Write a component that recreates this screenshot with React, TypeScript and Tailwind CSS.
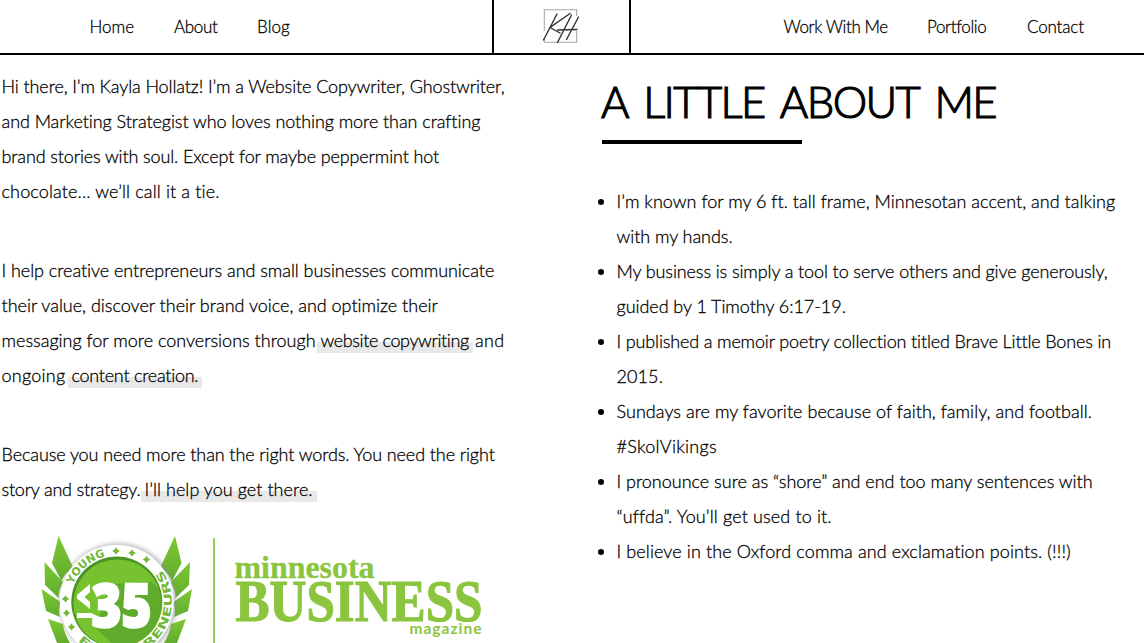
import type { ReactNode } from "react";

function Line({ className = "", children }: { className?: string; children: ReactNode }) {
  return <span className={`block h-[35px] whitespace-nowrap ${className}`}>{children}</span>;
}

function Highlight({ className = "", children }: { className?: string; children: ReactNode }) {
  return (
    <a
      href="#"
      className={`mt-[8px] block h-[22px] bg-linear-to-b from-transparent from-50% to-[#e8e8e8] to-50% pl-[3.5px] leading-[19px] ${className}`}
    >
      {children}
    </a>
  );
}

function Monogram() {
  return (
    <svg width="40" height="40" viewBox="540 5 40 40" fill="none" className="mr-[4px]">
      <path d="M576.7 16V9.7H544.3V31M544.3 38V42.3H576.7V31" stroke="#a8a8a8" strokeWidth="1.1" />
      <path d="M557 14L543.5 40M570 13.5L550 27.5L560 33M571.5 15L557.5 42.5M557.5 30L577 29.5M578.5 17L566.5 39.5" stroke="#333" strokeWidth="1.4" strokeLinecap="round" />
    </svg>
  );
}

const stars = [[116, 551], [132, 553], [146.5, 559.5], [65.5, 599], [66.5, 613], [71.5, 627]];

function AwardLogo() {
  return (
    <svg width="500" height="123" viewBox="0 520 500 123" className="block">
      <defs>
        <linearGradient id="leaf" x1="0" y1="0" x2="0" y2="1">
          <stop offset="0" stopColor="#7cc832" />
          <stop offset="1" stopColor="#62ad2c" />
        </linearGradient>
        <filter id="soft" x="-20%" y="-20%" width="140%" height="140%">
          <feGaussianBlur stdDeviation="2" />
        </filter>
        <clipPath id="disc"><circle cx="116.8" cy="602" r="45" /></clipPath>
        <path id="arcTop" d="M69.8 602A47 47 0 0 1 163.8 602" />
        <path id="arcBottom" d="M61.8 602A55 55 0 0 0 171.8 602A55 55 0 0 0 116.8 547" />
      </defs>
      <g fill="url(#leaf)">
        <path d="M58.5 536L73 567Q65 573 61.5 581L52 563Z" />
        <path d="M44.5 562L63 582Q58.5 590 58.5 598L45 585Z" />
        <path d="M41.5 589L60.5 602Q58 611 60 617L46 611Z" />
        <path d="M48 619L63 624Q64 633 70 643H57Z" />
        <path d="M175 536L160.5 567Q168.5 573 172 581L181.5 563Z" />
        <path d="M190 562L171 582Q175.5 590 175.5 598L189 585Z" />
        <path d="M192 589L173.5 602Q176 611 174 617L188 611Z" />
        <path d="M186 619L171 624Q170 633 164 643H177Z" />
      </g>
      <circle cx="118" cy="602" r="59" fill="#888" opacity=".5" filter="url(#soft)" />
      <circle cx="116.8" cy="602" r="57" fill="#fff" />
      <circle cx="116.8" cy="602" r="45.5" fill="#4d9425" />
      <circle cx="117.5" cy="603.5" r="44" fill="#76c32f" />
      <g clipPath="url(#disc)">
        <path d="M110 584L152 582L175 605V670H140L96 628Z" fill="#4f9829" opacity=".55" />
      </g>
      <g fill="#72b83a">
        {stars.map(([x, y]) => (
          <path key={`${x}-${y}`} transform={`translate(${x} ${y})`} d="M0-3.8L1.5-1.5L3.8 0L1.5 1.5L0 3.8L-1.5 1.5L-3.8 0L-1.5-1.5Z" />
        ))}
      </g>
      <g fill="#72b83a" className="font-['DejaVu_Sans'] text-[11px] font-bold">
        <text><textPath href="#arcTop" startOffset="18" textLength="44" lengthAdjust="spacingAndGlyphs">YOUNG</textPath></text>
        <text><textPath href="#arcBottom" startOffset="43" textLength="164" lengthAdjust="spacingAndGlyphs">ENTREPRENEURS</textPath></text>
      </g>
      <text x="91.5" y="627" textLength="60" lengthAdjust="spacingAndGlyphs" fill="#fff" stroke="#fff" strokeWidth="2.5" className="font-['Open_Sans'] text-[61px] font-extrabold">35</text>
      <path d="M90 584V592L84.5 597L90 602V609L77 598.5V595Z" fill="#fff" />
      <path d="M77 613H92V618H77Z" fill="#fff" />
      <path d="M214 538V643" stroke="#8fcf5a" strokeWidth="2" />
      <g fill="#8bc53f" stroke="#8bc53f" className="font-['Liberation_Serif'] font-bold">
        <text x="234.5" y="578" strokeWidth=".3" textLength="140" lengthAdjust="spacingAndGlyphs" className="text-[31px]">minnesota</text>
        <text x="235.5" y="621" strokeWidth="1.2" textLength="247" lengthAdjust="spacingAndGlyphs" className="text-[60px]">BUSINESS</text>
      </g>
      <text x="409.5" y="634" textLength="72" fill="#8bc53f" className="font-[Lato] text-[15.5px] font-bold">magazine</text>
    </svg>
  );
}

export default function App() {
  return (
    <div className="h-[643px] overflow-hidden bg-white font-[Lato,sans-serif] text-[18px] leading-[35px] font-light text-black [-webkit-text-stroke:0.28px_currentColor]">
      <header className="flex h-[55px] border-b-2 border-black text-[17px] leading-[54px] whitespace-nowrap">
        <nav className="flex h-[53px] w-[492px] shrink-0 pl-[89.5px]">
          <a href="#" className="w-[84.5px]">Home</a>
          <a href="#" className="w-[83px] tracking-[-0.3px]">About</a>
          <a href="#" className="tracking-[0.1px]">Blog</a>
        </nav>
        <div className="flex h-[53px] w-[139px] shrink-0 justify-center border-x-2 border-black pt-[5px]">
          <Monogram />
        </div>
        <nav className="flex h-[53px] pl-[152.5px]">
          <a href="#" className="w-[143.5px] tracking-[-0.4px]">Work With Me</a>
          <a href="#" className="w-[100px] tracking-[-0.35px]">Portfolio</a>
          <a href="#" className="tracking-[-0.15px]">Contact</a>
        </nav>
      </header>
      <main className="flex">
        <section className="w-[601px] shrink-0 pt-[14px]">
          <div className="flex flex-col gap-[44px] pl-[1.5px]">
            <p>
              <Line className="tracking-[-0.11px]">Hi there, I’m Kayla Hollatz! I’m a Website Copywriter, Ghostwriter,</Line>
              <Line className="tracking-[-0.07px]">and Marketing Strategist who loves nothing more than crafting</Line>
              <Line className="tracking-[-0.13px]">brand stories with soul. Except for maybe peppermint hot</Line>
              <Line className="tracking-[0.13px]">chocolate... we’ll call it a tie.</Line>
            </p>
            <p>
              <Line className="tracking-[-0.05px]">I help creative entrepreneurs and small businesses communicate</Line>
              <Line className="tracking-[-0.01px]">their value, discover their brand voice, and optimize their</Line>
              <Line className="flex">
                <span className="w-[315.5px]">messaging for more conversions through</span>
                <Highlight className="w-[156px] tracking-[-0.38px]">website copywriting</Highlight>
                <span className="pl-[2px] tracking-[0.3px]">and</span>
              </Line>
              <Line className="flex">
                <span className="w-[66.5px] tracking-[0.26px]">ongoing</span>
                <Highlight className="w-[134px] tracking-[-0.26px]">content creation.</Highlight>
              </Line>
            </p>
            <p>
              <Line className="tracking-[-0.1px]">Because you need more than the right words. You need the right</Line>
              <Line className="flex">
                <span className="w-[139.5px] tracking-[-0.21px]">story and strategy.</span>
                <Highlight className="w-[175.5px] tracking-[0.05px]">I’ll help you get there.</Highlight>
              </Line>
            </p>
          </div>
          <div className="mt-[13px] [-webkit-text-stroke:0]">
            <AwardLogo />
          </div>
        </section>
        <section className="pt-[20px]">
          <h1 className="h-[54px] text-[43.5px] leading-[52px] tracking-[-1.6px] [word-spacing:6.5px] whitespace-nowrap [-webkit-text-stroke:1.2px_currentColor]">A LITTLE ABOUT ME</h1>
          <div className="mt-[11px] ml-px h-[4px] w-[200px] bg-black" />
          <ul className="mt-[40px] list-outside list-disc pl-[15.5px]">
            <li>
              <Line className="tracking-[0.02px]">I’m known for my 6 ft. tall frame, Minnesotan accent, and talking</Line>
              <Line className="tracking-[-0.05px]">with my hands.</Line>
            </li>
            <li>
              <Line className="tracking-[-0.11px]">My business is simply a tool to serve others and give generously,</Line>
              <Line className="tracking-[-0.05px]">guided by 1 Timothy 6:17-19.</Line>
            </li>
            <li>
              <Line className="tracking-[-0.15px]">I published a memoir poetry collection titled Brave Little Bones in</Line>
              <Line className="tracking-[0.1px]">2015.</Line>
            </li>
            <li>
              <Line className="tracking-[0.04px]">Sundays are my favorite because of faith, family, and football.</Line>
              <Line className="tracking-[0.3px]">#SkolVikings</Line>
            </li>
            <li>
              <Line className="tracking-[-0.01px]">I pronounce sure as “shore” and end too many sentences with</Line>
              <Line className="tracking-[0.14px]">“uffda”. You’ll get used to it.</Line>
            </li>
            <li>
              <Line className="tracking-[0.11px]">I believe in the Oxford comma and exclamation points. (!!!)</Line>
            </li>
          </ul>
        </section>
      </main>
    </div>
  );
}
